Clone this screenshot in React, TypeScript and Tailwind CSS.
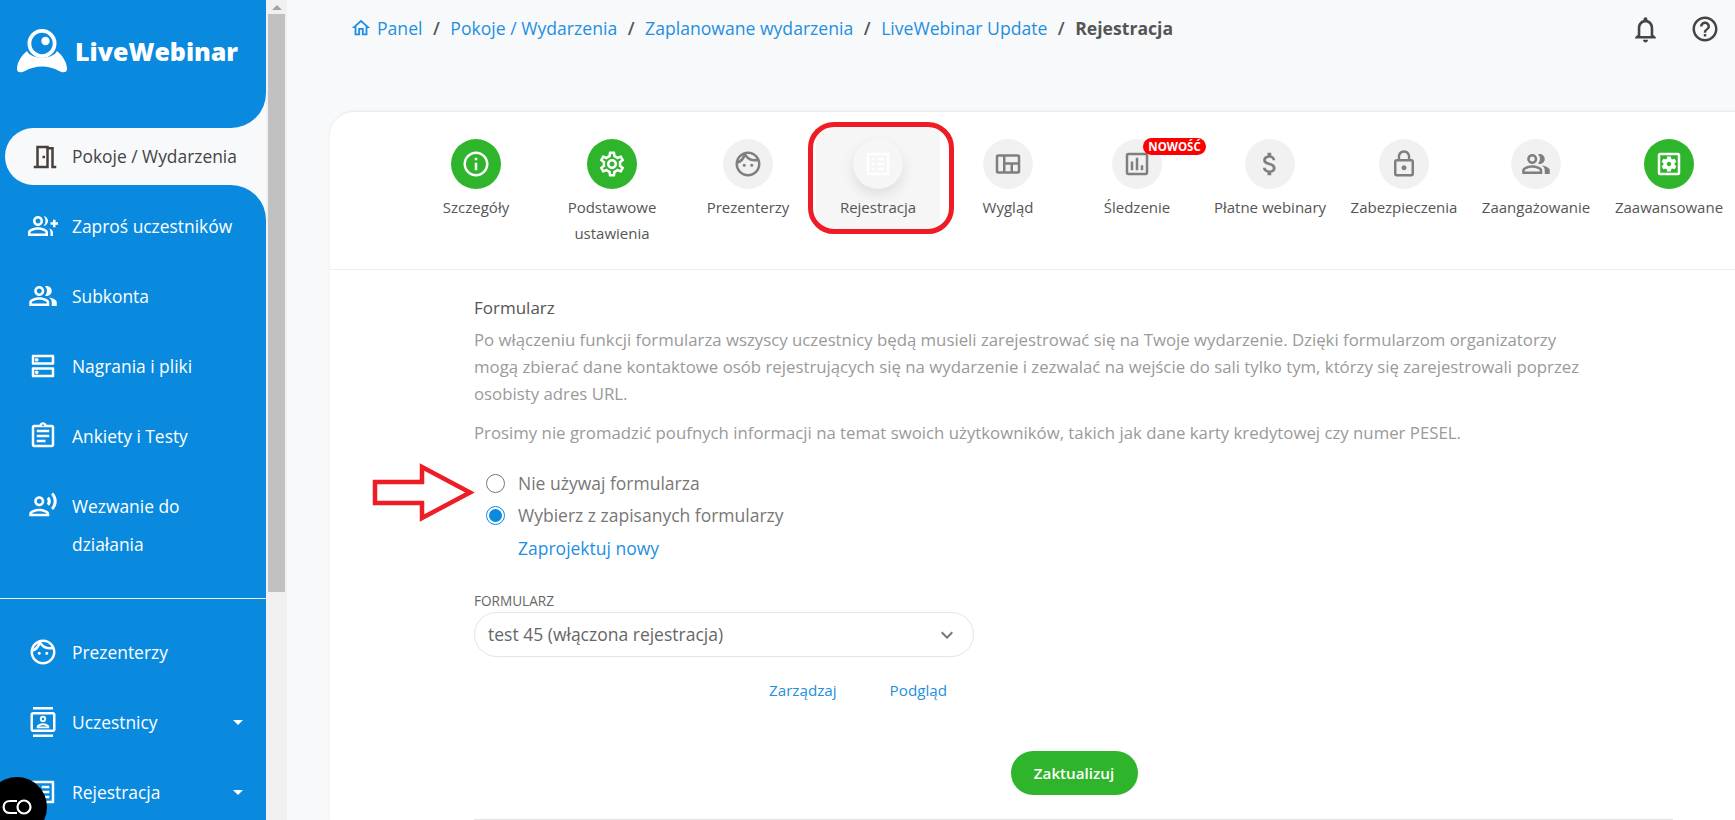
import React from "react";
import {
  MdOutlineMeetingRoom, MdOutlineGroupAdd, MdOutlinePeopleAlt, MdOutlineDns, MdOutlineAssignment,
  MdOutlineRecordVoiceOver, MdOutlineFace, MdOutlineContacts, MdOutlineListAlt, MdInfoOutline,
  MdOutlineSettings, MdOutlineAssessment, MdAttachMoney, MdLockOutline,
  MdOutlineSettingsApplications, MdOutlineHome, MdNotificationsNone, MdHelpOutline, MdKeyboardArrowDown, MdArrowDropDown,
} from "react-icons/md";

const font = { fontFamily: '"Open Sans", sans-serif' };

function NavItem({ icon: Icon, label, caret }: { icon: any; label: React.ReactNode; caret?: boolean }) {
  return (
    <div className="flex h-[70px] items-center pl-[28px] pr-[16px] text-[17.4px] leading-[38px] text-white">
      <Icon className="w-[30px] h-[30px] shrink-0" />
      <span className="ml-[14px] flex-1">{label}</span>
      {caret && <MdArrowDropDown className="w-[24px] h-[24px] shrink-0" />}
    </div>
  );
}

function Logo() {
  return (
    <div className="flex items-center pl-[17px] pt-[29px]">
      <svg width="50" height="44" viewBox="0 0 50 44" className="shrink-0">
        <circle cx="25" cy="14.5" r="12.6" fill="none" stroke="#fff" strokeWidth="3.8" />
        <circle cx="28.5" cy="12" r="4.2" fill="#fff" />
        <path d="M10 22 C14 31 36 31 40 22 C45 26 50 33 50 40 C50 44 46 44 42 42 C32 36 18 36 8 42 C4 44 0 44 0 40 C0 33 5 26 10 22 Z" fill="#fff" />
      </svg>
      <span className="ml-[8px] text-[25px] font-extrabold leading-[44px] text-white">LiveWebinar</span>
    </div>
  );
}

function LayoutIcon({ className }: { className?: string }) {
  return (
    <svg viewBox="0 0 24 24" className={className} fill="none" stroke="currentColor" strokeWidth="2">
      <rect x="3.2" y="5.2" width="17.6" height="13.6" rx="1" />
      <path d="M9 5.2 V18.8 M9 11.5 H20.8 M15 11.5 V18.8" />
    </svg>
  );
}

const tabs = [
  { w: 136, label: "Szczegóły", icon: MdInfoOutline, green: true },
  { w: 136, label: "Podstawowe ustawienia", icon: MdOutlineSettings, green: true },
  { w: 136, label: "Prezenterzy", icon: MdOutlineFace },
  { w: 124, label: "Rejestracja", icon: MdOutlineListAlt, active: true },
  { w: 136, label: "Wygląd", icon: LayoutIcon },
  { w: 122, label: "Śledzenie", icon: MdOutlineAssessment, badge: true },
  { w: 144, label: "Płatne webinary", icon: MdAttachMoney },
  { w: 124, label: "Zabezpieczenia", icon: MdLockOutline },
  { w: 140, label: "Zaangażowanie", icon: MdOutlinePeopleAlt },
  { w: 126, label: "Zaawansowane", icon: MdOutlineSettingsApplications, green: true },
];

function Tab({ t }: { t: (typeof tabs)[number] }) {
  const Icon = t.icon as any;
  return (
    <div className="flex shrink-0 justify-center" style={{ width: t.w }}>
      <div className={`relative flex h-[104px] w-full flex-col items-center pt-[14px] ${t.active ? "rounded-[10px] bg-[#f6f6f6]" : ""}`}>
        <div
          className={`flex h-[50px] w-[50px] shrink-0 items-center justify-center rounded-full ${
            t.green ? "bg-[#2fb52c] text-white" : t.active ? "bg-[#f6f6f6] text-white shadow-[0_6px_14px_rgba(0,0,0,0.1)]" : "bg-[#f1f1f1] text-[#7f7f7f]"
          }`}
        >
          <Icon className="h-[30px] w-[30px]" />
        </div>
        {t.badge && (
          <span className="absolute left-[67px] top-[13px] flex h-[17px] w-[63px] items-center justify-center rounded-full bg-[#ff0000] text-[11.5px] font-bold leading-none text-white">
            NOWOŚĆ
          </span>
        )}
        <span className="mt-[5px] w-[128px] shrink-0 text-center text-[15px] leading-[26px] text-[#555]">{t.label}</span>
      </div>
    </div>
  );
}

function Crumb({ children }: { children: React.ReactNode }) {
  return <span className="text-[#1f8fe0]">{children}</span>;
}
function Sep() {
  return <span className="mx-[10.5px] font-semibold text-[#555]">/</span>;
}

export default function App() {
  return (
    <div className="relative flex h-[820px] w-[1735px] overflow-hidden bg-[#f8f9fb]" style={font}>
      {/* sidebar */}
      <aside className="flex h-full w-[266px] shrink-0 flex-col bg-[#f8f9fb]">
        <div className="h-[128px] shrink-0 rounded-br-[35px] bg-[#0a8ade]">
          <Logo />
        </div>
        <div className="h-[57px] shrink-0 bg-[#0a8ade] pl-[5px]">
          <div className="flex h-full items-center rounded-l-full bg-[#f8f9fb] pl-[25px] text-[17.4px] text-[#444]">
            <MdOutlineMeetingRoom className="h-[30px] w-[30px] shrink-0 text-[#4a3f3a]" />
            <span className="ml-[12px]">Pokoje / Wydarzenia</span>
          </div>
        </div>
        <div className="flex flex-1 flex-col rounded-tr-[35px] bg-[#0a8ade] pt-[6px]">
          <NavItem icon={MdOutlineGroupAdd} label="Zaproś uczestników" />
          <NavItem icon={MdOutlinePeopleAlt} label="Subkonta" />
          <NavItem icon={MdOutlineDns} label="Nagrania i pliki" />
          <NavItem icon={MdOutlineAssignment} label="Ankiety i Testy" />
          <div className="flex h-[127px] items-start pl-[28px] pt-[16px] text-[17.4px] leading-[38px] text-white">
            <MdOutlineRecordVoiceOver className="mt-[3px] h-[30px] w-[30px] shrink-0" />
            <span className="ml-[14px] w-[150px]">Wezwanie do działania</span>
          </div>
          <div className="h-px bg-[#e8f3fb]" />
          <div className="pt-[18px]">
            <NavItem icon={MdOutlineFace} label="Prezenterzy" />
            <NavItem icon={MdOutlineContacts} label="Uczestnicy" caret />
            <NavItem icon={MdOutlineListAlt} label="Rejestracja" caret />
          </div>
        </div>
      </aside>

      {/* page scrollbar */}
      <div className="flex h-full w-[21px] shrink-0 flex-col items-center bg-[#f1f1f1]">
        <div className="flex h-[14px] items-center justify-center">
          <div className="h-0 w-0 border-x-[5px] border-b-[5px] border-x-transparent border-b-[#a3a3a3]" />
        </div>
        <div className="h-[578px] w-[17px] bg-[#c1c1c1]" />
      </div>

      {/* main */}
      <main className="min-w-0 flex-1 pl-[43px]">
        <div className="flex h-[111px] items-start pr-[15px] pt-[14px]">
          <div className="flex h-[28px] flex-1 items-center pl-[20px] text-[17.6px]">
            <MdOutlineHome className="mr-[5px] h-[22px] w-[22px] text-[#1f8fe0]" />
            <Crumb>Panel</Crumb>
            <Sep />
            <Crumb>Pokoje / Wydarzenia</Crumb>
            <Sep />
            <Crumb>Zaplanowane wydarzenia</Crumb>
            <Sep />
            <Crumb>LiveWebinar Update</Crumb>
            <Sep />
            <span className="font-bold text-[#555]">Rejestracja</span>
          </div>
          <MdNotificationsNone className="mr-[29px] h-[31px] w-[31px] text-[#444]" />
          <MdHelpOutline className="h-[30px] w-[30px] text-[#444]" />
        </div>

        <div className="h-[709px] rounded-tl-[24px] border-t border-[#ececec] bg-white shadow-[0_0_3px_rgba(0,0,0,0.06)]">
          <div className="flex h-[158px] items-start border-b border-[#eeeeee] pl-[78px] pt-[13px]">
            {tabs.map((t) => (
              <Tab key={t.label} t={t} />
            ))}
          </div>

          <div className="w-[1199px] pl-[144px] text-[17.5px]">
            <h3 className="pt-[24px] text-[17px] leading-[28px] text-[#555]">Formularz</h3>
            <p className="mt-[4px] w-[1120px] text-[16.8px] leading-[27px] text-[#9a9a9a]">
              Po włączeniu funkcji formularza wszyscy uczestnicy będą musieli zarejestrować się na Twoje wydarzenie. Dzięki formularzom organizatorzy mogą zbierać dane kontaktowe osób rejestrujących się na wydarzenie i zezwalać na wejście do sali tylko tym, którzy się zarejestrowali poprzez osobisty adres URL.
            </p>
            <p className="mt-[12px] whitespace-nowrap text-[16.8px] leading-[27px] text-[#9a9a9a]">
              Prosimy nie gromadzić poufnych informacji na temat swoich użytkowników, takich jak dane karty kredytowej czy numer PESEL.
            </p>
            <div className="mt-[21px] flex h-[32px] items-center pl-[12px] text-[#777]">
              <span className="h-[19px] w-[19px] rounded-full border border-[#777] bg-white" />
              <span className="ml-[13px]">Nie używaj formularza</span>
            </div>
            <div className="flex h-[33px] items-center pl-[12px] text-[#777]">
              <span className="flex h-[19px] w-[19px] items-center justify-center rounded-full border border-[#0a8ade]">
                <span className="h-[13px] w-[13px] rounded-full bg-[#0a8ade]" />
              </span>
              <span className="ml-[13px]">Wybierz z zapisanych formularzy</span>
            </div>
            <div className="flex h-[33px] items-center pl-[44px] text-[#1f8fe0]">Zaprojektuj nowy</div>
            <div className="mt-[28px] text-[13.6px] leading-[16px] text-[#666]">FORMULARZ</div>
            <div className="mt-[3px] flex h-[45px] w-[500px] items-center justify-between rounded-full border border-[#e4e4e4] bg-white pl-[13px] pr-[14px] text-[#666]">
              <span>test 45 (włączona rejestracja)</span>
              <MdKeyboardArrowDown className="h-[24px] w-[24px] text-[#777]" />
            </div>
            <div className="mt-[23px] flex h-[20px] w-[473px] items-center justify-end gap-[53px] text-[15.2px] text-[#1f8fe0]">
              <span>Zarządzaj</span>
              <span>Podgląd</span>
            </div>
            <div className="mt-[51px] flex w-[1200px] justify-center">
              <button className="h-[44px] w-[127px] rounded-full bg-[#2fb52c] text-[15.2px] font-semibold text-white">Zaktualizuj</button>
            </div>
            <div className="mt-[24px] h-px w-[1199px] bg-[#e4e4e4]" />
          </div>
        </div>
      </main>

      {/* red annotations over the screenshot */}
      <div className="absolute left-[808px] top-[122px] h-[112px] w-[146px] rounded-[26px] border-[5px] border-[#ee1c25]" />
      <svg className="absolute left-[370px] top-[462px]" width="106" height="62" viewBox="0 0 106 62">
        <path d="M5 20 H52 V5 L100 30.5 L52 56 V41 H5 Z" fill="#fff" stroke="#ee1c25" strokeWidth="4.5" />
      </svg>

      {/* black chat bubble */}
      <div className="absolute left-[-13px] top-[777px] flex h-[60px] w-[60px] items-center justify-center rounded-full bg-black">
        <svg width="30" height="16" viewBox="0 0 30 16">
          <path d="M15 2 H8 C-0.5 2 -0.5 14 8 14 H15" fill="none" stroke="#fff" strokeWidth="2.2" />
          <circle cx="22" cy="8" r="6.5" fill="none" stroke="#fff" strokeWidth="2.2" />
        </svg>
      </div>
    </div>
  );
}
